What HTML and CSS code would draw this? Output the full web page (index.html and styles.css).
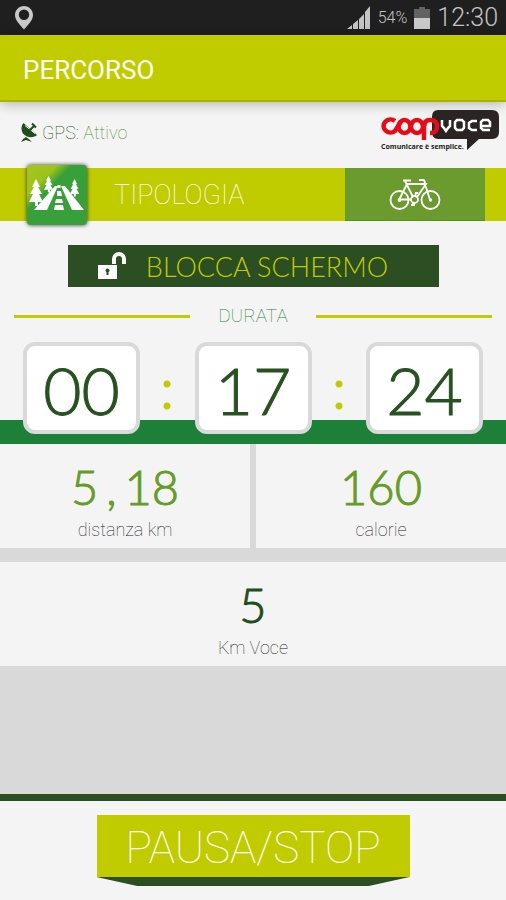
FILE: index.html
```html
<!DOCTYPE html>
<html lang="it">
<head>
<meta charset="utf-8">
<meta name="viewport" content="width=device-width, initial-scale=1">
<title>Percorso</title>
<link rel="stylesheet" href="styles.css">
</head>
<body>
<div class="status">
  <svg class="pin" width="18" height="24" viewBox="0 0 18 24" aria-hidden="true"><path fill-rule="evenodd" fill="#c9c9c9" d="M9 0C4 0 0 4 0 9c0 5 4 9 9 14.500C14 18 18 14 18 9c0-5-4-9-9-9zm0 3.500a5.200 5.200 0 1 1 0 10.400A5.200 5.200 0 0 1 9 3.500z"/></svg>
  <div class="status-right">
    <svg width="24" height="24" viewBox="0 0 24 24" fill="#c4c4c4" aria-hidden="true"><path d="M0 23L5 19v4zM6 18l5-4v9H6zM12 13l5-5v15h-5zM18 6l5-6v23h-5z"/></svg>
    <span class="percent">54%</span>
    <svg width="16" height="22" viewBox="0 0 16 22" aria-hidden="true"><path fill="#626262" d="M5 0h6v2h5v10H0V2h5z"/><path fill="#c9c9c9" d="M0 11h16v11H0z"/></svg>
    <span class="clock">12:30</span>
  </div>
</div>
<header class="title-bar"><h1>PERCORSO</h1></header>
<main>
  <section class="info">
    <div class="gps">
      <svg width="17" height="21" viewBox="0 0 17 21" aria-hidden="true"><path fill="#1f4d1c" d="M2.500 1C-1 5 0 12 6 14.500c4 1.500 8 .500 10-1.500z"/><path fill="#1f4d1c" d="M0 20q1-3 5-5 3 2 6 5l-6-2z"/><path d="M4 3.500l10 8" stroke="#f4f4f4" stroke-width="1"/><path d="M8 9l6-6M11 1.500l4 4" stroke="#1f4d1c" stroke-width="2" fill="none"/></svg>
      <span>GPS: <b>Attivo</b></span>
    </div>
    <svg class="logo" width="118" height="44" viewBox="0 0 118 44" role="img" aria-label="Coop Voce. Comunicare è semplice.">
      <path fill="#2a2523" d="M57 0h54q7 0 7 7v15q0 7-7 7H98L86 40V29H57q-6 0-6-7V7q0-7 6-7z"/>
      <g fill="none" stroke="#e30c18" stroke-width="4.500"><path d="M14 11A7 6.500 0 1 0 14 21L20 11.500"/><ellipse cx="23.500" cy="16.500" rx="6" ry="6.500"/><ellipse cx="36" cy="16.500" rx="6" ry="6.500"/><path d="M41 12l3 5M43 30V17q0-7 6-7 7 0 7 6.500t-7 6.500"/></g>
      <g fill="none" stroke="#fff" stroke-width="2.500"><path d="M61 10v6l2 2 2 3 2-3 2-2v-6M76 10h5l2 2v6l-2 2h-5l-2-2v-6zM96 11h-5l-3 2v5l3 2h5M100 16h9v-4l-2-2h-5l-2 2v6l2 2h7"/></g>
      <text class="tagline" x="0" y="39">Comunicare è semplice.</text>
    </svg>
  </section>
  <section class="type">
    <svg class="road" width="60" height="60" viewBox="0 0 60 60" aria-hidden="true">
      <defs><linearGradient id="g" x2="1" y2="1"><stop stop-color="#a4c51b"/><stop offset=".25" stop-color="#9fc31c"/><stop offset=".38" stop-color="#37a038"/></linearGradient><path id="tree" d="M7 0l4 8H9l4 7h-3l4 8H9v4H6v-4H0l4-8H1l4-7H3z"/></defs>
      <rect width="60" height="60" rx="4" fill="url(#g)"/>
      <g fill="#fff"><use href="#tree" transform="translate(2 14)"/><use href="#tree" transform="translate(17 11) scale(.65 .6)"/><use href="#tree" transform="translate(43 14) scale(.65 .65)"/><path d="M7 45l21-24h3L20 45zM34 21h4l19 24H45zM30.500 20h3v3h-3zM30 26h4l1 5h-5zM29 34h6l1 4h-8zM28 40h8l1 5H27z"/></g>
    </svg>
    <h2>TIPOLOGIA</h2>
    <button class="bike" aria-label="Bicicletta"><svg width="52" height="33" viewBox="0 0 52 33" fill="none" stroke="#fff" stroke-width="1.800" aria-hidden="true"><circle cx="10.500" cy="22" r="9"/><circle cx="41.500" cy="22" r="9"/><circle cx="25.500" cy="21.500" r="3.500"/><path d="M10 21.500h12M28 19L37 6H18L10 22M16 3l8 16M14 2.500h8M30 2h4q2 0 2 4l5 16M25 24l-2 3M22 27h4M26 19l1-4M26 15h3"/><circle cx="10.500" cy="22" r="1"/><circle cx="41.500" cy="22" r=".8"/></svg></button>
  </section>
  <button class="lock">
    <svg width="28" height="28" viewBox="0 0 28 28" aria-hidden="true"><path fill="#fff" d="M0 13h19v14H0z"/><path d="M16 12V7a5 5 0 0 1 10 0v5" fill="none" stroke="#fff" stroke-width="4"/><circle cx="9.500" cy="18.500" r="2" fill="#2b4f23"/><path fill="#2b4f23" d="M8.500 18h2v5h-2z"/></svg>
    <span>BLOCCA SCHERMO</span>
  </button>
  <section class="duration">
    <h2>DURATA</h2>
    <div class="timer"><span class="box">00</span><i></i><span class="box">17</span><i></i><span class="box">24</span></div>
  </section>
  <section class="stats">
    <div class="stat"><strong>5<span class="comma">,</span>18</strong><span>distanza km</span></div>
    <div class="stat"><strong>160</strong><span>calorie</span></div>
    <div class="stat wide"><strong>5</strong><span>Km Voce</span></div>
  </section>
</main>
<footer><button class="stop">PAUSA/STOP</button></footer>
</body>
</html>
```
FILE: styles.css
```css
* { box-sizing: border-box; }
body { margin: 0; min-height: 100vh; display: flex; flex-direction: column; background: #f4f4f4; font-family: Roboto, sans-serif; }
h1, h2 { margin: 0; font-weight: normal; }
button { border: 0; padding: 0; font-family: inherit; }
svg { display: block; flex: none; }
.status { height: 35px; background: #1f1f1f; display: flex; align-items: center; justify-content: space-between; padding: 0 8px 0 15px; color: #c4c4c4; }
.status-right { display: flex; align-items: center; gap: 7px; }
.percent { font-size: 16px; font-weight: 300; }
.clock { font-size: 25px; font-weight: 300; line-height: 35px; }
.title-bar { height: 67px; background: #c0cc00; border-bottom: 2px solid #a9b300; padding: 4px 23px 0; display: flex; align-items: center; box-shadow: 0 2px 12px #0004; color: #fff; }
h1 { font-size: 26px; }
main { flex: 1; display: flex; flex-direction: column; }
.info { height: 66px; display: flex; justify-content: space-between; padding: 8px 7px 0 21px; }
.gps { display: flex; align-items: center; height: 44px; gap: 4px; font-size: 18px; font-weight: 100; color: #1f4d1c; }
.gps b { font-weight: 100; color: #4c8c16; }
.logo { overflow: visible; }
.tagline { font: 700 7px "Open Sans", sans-serif; fill: #222; }
.type { height: 53px; background: #c0cc00; display: flex; align-items: center; padding: 0 21px 0 27px; }
.road { filter: drop-shadow(0 0 2px #333); }
.type h2 { flex: 1; padding-left: 27px; font-size: 27px; font-weight: 100; color: #fff; }
.bike { width: 140px; height: 53px; background: #6b9b2f; border-bottom: 1px solid #529413; display: grid; place-items: center; }
.lock { width: 371px; height: 42px; margin: 24px auto 0; padding-right: 20px; background: #2b4f23; color: #c0cc00; font-family: Lato, sans-serif; font-size: 27px; font-weight: 300; display: flex; align-items: center; justify-content: center; gap: 20px; }
.duration { padding: 17px 14px 0; background: linear-gradient(#f4f4f4 133px, #1d8038 133px); }
.duration h2 { display: flex; align-items: center; gap: 28px; font-size: 19px; line-height: 24px; font-weight: 100; color: #1d8038; }
.duration h2::before, .duration h2::after { content: ""; flex: 1; height: 3px; background: #c0cc00; }
.timer { display: flex; justify-content: space-between; padding: 14px 9px 10px; }
.box { width: 117px; height: 92px; border: 4px solid #d9d9d9; border-radius: 12px; background: #fff; display: grid; place-items: center; padding-top: 4px; font-family: Lato, sans-serif; font-size: 66px; line-height: 80px; font-weight: 300; color: #275220; -webkit-text-stroke: 1px #275220; }
.timer i { width: 8px; height: 30px; margin-top: 38px; background: radial-gradient(circle at center, #c0cc00 3px, #c0cc0000 4px) 0 0 / 8px 8px no-repeat, radial-gradient(circle at center, #c0cc00 3px, #c0cc0000 4px) 0 100% / 8px 8px no-repeat; }
.stats { flex: 1; display: grid; grid-template-columns: 1fr 1fr; grid-auto-rows: 104px; align-content: start; gap: 14px 6px; background: #d9d9d9; }
.stat { background: #f4f4f4; display: flex; flex-direction: column; align-items: center; padding-top: 12px; font-size: 18px; line-height: 24px; font-weight: 100; color: #222; }
.stat strong { font-family: Lato, sans-serif; font-size: 47px; line-height: 62px; font-weight: 300; color: #659c27; -webkit-text-stroke: 1px currentColor; }
.comma { margin: 0 8px; }
.stat.wide { grid-column: 1 / -1; }
.wide strong { color: #1f4d1c; }
footer { border-top: 7px solid #2b4f23; height: 106px; padding-top: 14px; display: flex; justify-content: center; align-items: flex-start; }
.stop { position: relative; width: 313px; height: 62px; padding-top: 4px; background: #c0cc00; color: #fff; font-size: 44px; font-weight: 100; }
.stop::after { content: ""; position: absolute; left: 0; top: 100%; width: 100%; height: 9px; background: #2b4f23; clip-path: polygon(0 0, 100% 0, 87% 100%, 13% 100%); }
```
